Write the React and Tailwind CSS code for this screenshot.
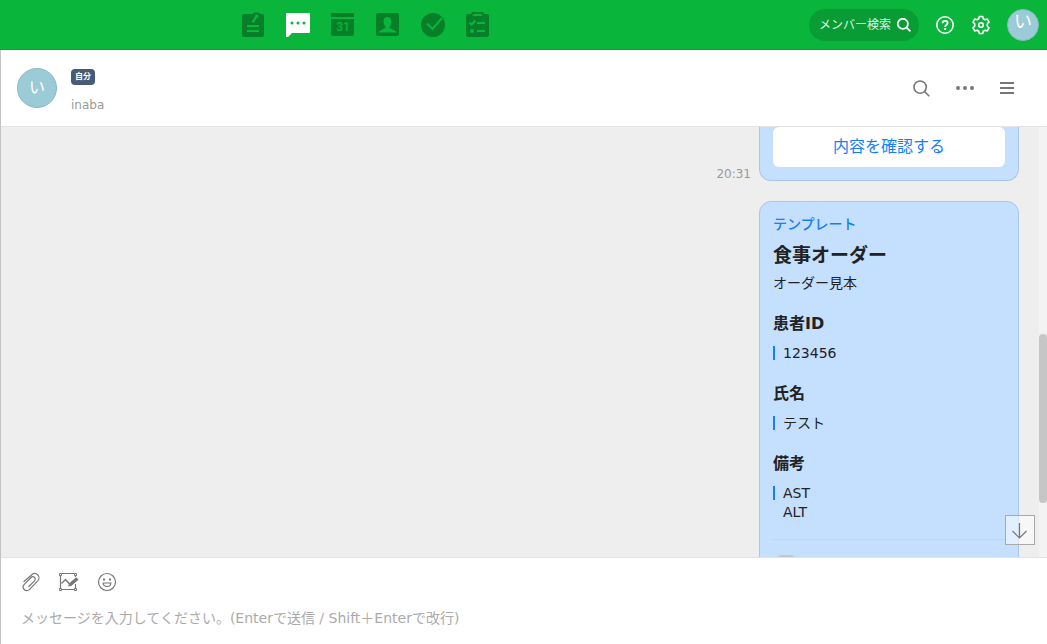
import React, { useState } from "react";

const navItems = [
  {
    label: "掲示板",
    icon: (
      <svg width="24" height="26" viewBox="0 0 24 26" fill="none">
        <path
          d="M3 2h8.500c.8-1.300 2-1.500 3.500-1.500 2.500 0 3.500.5 4 1.500h2a2 2 0 0 1 2 2v19a2 2 0 0 1-2 2H3a2 2 0 0 1-2-2V4a2 2 0 0 1 2-2z"
          fill="#077f29"
        />
        <path
          d="M15.500 4.500l-3.500 5"
          stroke="#09b53b"
          strokeWidth="2.200"
          strokeLinecap="round"
        />
        <circle cx="15.800" cy="4.200" r="1.700" fill="#09b53b" />
        <path d="M6 14h12M6 19h12" stroke="#09b53b" strokeWidth="2" />
      </svg>
    ),
  },
  {
    label: "トーク",
    icon: (
      <svg width="24" height="26" viewBox="0 0 24 26">
        <path
          d="M1 1h22a1 1 0 0 1 1 1v18a1 1 0 0 1-1 1H6l-4 4H0V2a1 1 0 0 1 1-1z"
          fill="#fff"
        />
        <g fill="#09b53b">
          <circle cx="6" cy="11" r="1.500" />
          <circle cx="12" cy="11" r="1.500" />
          <circle cx="18" cy="11" r="1.500" />
        </g>
      </svg>
    ),
  },
  {
    label: "カレンダー",
    icon: (
      <svg width="24" height="26" viewBox="0 0 24 26" fill="#077f29">
        <path d="M1 1h21a1 1 0 0 1 1 1v3H0V2a1 1 0 0 1 1-1z" />
        <path d="M0 7h23v15a2 2 0 0 1-2 2H2a2 2 0 0 1-2-2z" />
        <text
          x="12"
          y="19"
          textAnchor="middle"
          fontSize="12"
          fontWeight="500"
          fontFamily="Roboto, sans-serif"
          fill="#09b53b"
        >
          31
        </text>
      </svg>
    ),
  },
  {
    label: "アドレス帳",
    icon: (
      <svg width="24" height="26" viewBox="0 0 24 26">
        <rect y="1" width="23" height="23" rx="2" fill="#077f29" />
        <path
          d="M11.500 5c2.500 0 4 1.600 4 4.200 0 2.400-1 4.600-2 5.400v1.200c1 1.500 6 2 7 4.700h-18c1-2.700 6-3.200 7-4.700v-1.200c-1-.8-2-3-2-5.400C7.500 6.600 9 5 11.500 5z"
          fill="#09b53b"
        />
      </svg>
    ),
  },
  {
    label: "タスク",
    icon: (
      <svg width="24" height="26" viewBox="0 0 24 26" fill="none">
        <circle cx="12" cy="13" r="12" fill="#077f29" />
        <path d="M6 11.500l5.500 5.500L21 6" stroke="#09b53b" strokeWidth="2" />
      </svg>
    ),
  },
  {
    label: "アンケート",
    icon: (
      <svg width="24" height="26" viewBox="0 0 24 26" fill="none">
        <path
          d="M2 2h4v2h11V2h4a2 2 0 0 1 2 2v19a2 2 0 0 1-2 2H2a2 2 0 0 1-2-2V4a2 2 0 0 1 2-2z"
          fill="#077f29"
        />
        <path d="M6.500 3.500V1h10v2.500" stroke="#077f29" strokeWidth="1.800" />
        <path d="M8 2h7v2H8z" fill="#09b53b" />
        <path
          d="M3.500 10.500l2 2 4-4M11 11h8M11 19h8"
          stroke="#09b53b"
          strokeWidth="2"
        />
        <circle cx="6" cy="19" r="2" fill="#09b53b" />
      </svg>
    ),
  },
];

const fields = [
  { name: "患者ID", lines: ["123456"] },
  { name: "氏名", lines: ["テスト"] },
  { name: "備考", lines: ["AST", "ALT"] },
];

const SearchIcon = ({ size, width }) => (
  <svg
    width={size}
    height={size}
    viewBox="0 0 16 16"
    fill="none"
    stroke="currentColor"
    strokeWidth={width}
  >
    <circle cx="6.700" cy="6.700" r="5.800" />
    <path d="M10.800 10.800l4.500 4.500" />
  </svg>
);

const TopBar = () => {
  return (
    <header className="flex h-[50px] shrink-0 items-center justify-between border-b border-[#08a334] bg-[#09b53b] pr-2 pl-[241px]">
      <nav className="flex gap-[21px]">
        {navItems.map((item) => (
          <a key={item.label} href="#" aria-label={item.label}>
            {item.icon}
          </a>
        ))}
      </nav>
      <div className="flex items-center text-white">
        <button className="mr-4 flex h-8 items-center gap-1.5 rounded-full bg-[#099c34] pr-2 pl-2.5 text-xs text-[#dcf5e2]">
          メンバー検索
          <span className="text-white">
            <SearchIcon size={14} width={2} />
          </span>
        </button>
        <button aria-label="ヘルプ" className="mr-4">
          <svg
            width="20"
            height="20"
            viewBox="0 0 20 20"
            fill="none"
            stroke="currentColor"
          >
            <circle cx="10" cy="10" r="8.200" strokeWidth="1.600" />
            <path
              d="M7.600 8.300c0-1.500 1-2.400 2.500-2.400s2.500.9 2.500 2.100c0 1.700-2.400 1.800-2.400 3.900"
              strokeWidth="1.900"
            />
            <path d="M9.200 13h2v2h-2z" fill="currentColor" stroke="none" />
          </svg>
        </button>
        <button aria-label="設定" className="mr-4">
          <svg
            width="20"
            height="20"
            viewBox="0 0 20 20"
            fill="none"
            stroke="currentColor"
            strokeWidth="1.600"
            strokeLinejoin="round"
          >
            <path d="M8.300 1.500h3.400l.6 2.300 1.700 1 2.300-.7 1.700 3-1.700 1.700v2.400l1.700 1.700-1.700 3-2.300-.7-1.700 1-.6 2.300H8.300l-.6-2.300-1.700-1-2.300.7-1.700-3 1.700-1.700V8.800L2 7.100l1.700-3 2.300.7 1.700-1z" />
            <circle cx="10" cy="10" r="2.300" />
          </svg>
        </button>
        <button className="flex size-8 justify-center rounded-full border border-[#86bac6] bg-[#9bcbd7] text-lg leading-6">
          い
        </button>
      </div>
    </header>
  );
};

const ChatHeader = () => {
  return (
    <div className="flex h-[77px] shrink-0 items-center justify-between border-b border-[#e3e3e3] pr-8 pl-4">
      <div className="flex items-center gap-3.5">
        <div className="flex size-10 items-center justify-center rounded-full border border-[#86bac6] bg-[#9bcbd7] text-base text-white">
          い
        </div>
        <div className="flex flex-col items-start gap-3 pt-1.5">
          <span className="rounded-sm bg-[#475b78] px-1 text-[8px] leading-4 font-bold text-white">
            自分
          </span>
          <span className="text-xs leading-4 text-[#999]">inaba</span>
        </div>
      </div>
      <div className="flex items-center gap-[26px] text-[#777]">
        <button aria-label="検索">
          <SearchIcon size={17} width={1.5} />
        </button>
        <button aria-label="その他">
          <svg width="18" height="16" viewBox="0 0 18 16" fill="currentColor">
            <circle cx="2" cy="8" r="2" />
            <circle cx="9" cy="8" r="2" />
            <circle cx="16" cy="8" r="2" />
          </svg>
        </button>
        <button aria-label="メニュー">
          <svg width="15" height="16" viewBox="0 0 15 16" fill="currentColor">
            <path d="M0 2h14v2H0zM0 7h14v2H0zM0 12h14v2H0z" />
          </svg>
        </button>
      </div>
    </div>
  );
};

const Messages = () => {
  return (
    <main className="relative flex min-h-0 flex-1 bg-[#eee]">
      <div className="flex min-w-0 flex-1 flex-col items-end gap-5 overflow-hidden pr-5">
        <div className="flex shrink-0 items-end gap-2">
          <time className="text-xs leading-3.5 text-[#999]">20:31</time>
          <div className="w-[260px] rounded-b-xl border border-t-0 border-[#abc6e6] bg-[#c5dfff] px-[13px] pb-[13px]">
            <button className="h-10 w-full rounded-md bg-white text-base text-[#157efb]">
              内容を確認する
            </button>
          </div>
        </div>
        <article className="w-[260px] shrink-0 rounded-xl border border-[#abc6e6] bg-[#c5dfff] px-[13px] pt-3 text-sm text-[#222]">
          <p className="leading-5 font-medium text-[#157efb]">テンプレート</p>
          <h2 className="mt-[5px] text-[19px] leading-8 font-bold">
            食事オーダー
          </h2>
          <p className="mt-0.5 leading-5">オーダー見本</p>
          <dl>
            {fields.map((field) => (
              <div key={field.name} className="mt-[19px]">
                <dt className="text-base leading-6 font-bold">{field.name}</dt>
                <dd className="mt-2 flex gap-2 leading-[19px]">
                  <span className="mt-0.5 h-3.5 w-0.5 bg-[#157efb]" />
                  <div>
                    {field.lines.map((line) => (
                      <p key={line}>{line}</p>
                    ))}
                  </div>
                </dd>
              </div>
            ))}
          </dl>
          <div className="mt-[17px] border-t border-[#bad6f7] pt-[15px] pl-[3px] pb-4">
            <div className="size-5 rounded-md bg-[#c5c5c5]" />
          </div>
        </article>
      </div>
      {/* scrollbar */}
      <div className="w-2 bg-[#f3f3f3] pt-[207px]">
        <div className="h-[169px] rounded-full bg-[#c6c6c6]" />
      </div>
      <button
        aria-label="最新のメッセージへ"
        className="absolute right-3 bottom-3 flex size-[30px] items-center justify-center border border-[#aaa] bg-white/50 text-[#777]"
      >
        <svg
          width="16"
          height="18"
          viewBox="0 0 16 18"
          fill="none"
          stroke="currentColor"
          strokeWidth="1.200"
        >
          <path d="M7.500 2v15M.5 10l7 7 7-7" />
        </svg>
      </button>
    </main>
  );
};

const Composer = () => {
  const [message, setMessage] = useState("");

  return (
    <footer className="shrink-0 border-t border-[#e3e3e3] bg-white px-5 pt-3.5 pb-3.5">
      <div className="flex gap-[18px] text-[#777]">
        <button aria-label="ファイル添付">
          <svg
            width="20"
            height="20"
            viewBox="0 0 20 20"
            fill="none"
            stroke="currentColor"
            strokeWidth="1.200"
            strokeLinecap="round"
          >
            <path d="M3 9.500L10.800 2.700c1.700-1.500 4.200-1.500 5.800 0s1.900 4.200.4 5.900l-8.400 8.700c-1.600 1.600-4 1.600-5.400.2s-1.400-3.600.1-5.200l6.700-6.800c1-1 2.600-1.100 3.500-.1s.9 2.400 0 3.400l-5.700 5.700" />
          </svg>
        </button>
        <button aria-label="画像編集">
          <svg
            width="20"
            height="20"
            viewBox="0 0 20 20"
            fill="none"
            stroke="currentColor"
          >
            <path
              d="M1.500 3v14M16.500 12v5M3 1.500h12M3 17.500h12M16.500 3v2"
              strokeWidth="1.200"
            />
            <path d="M.5 1.500h2v2h-2zM15.500 1.500h2v2h-2zM.5 16.500h2v2h-2zM15.500 16.500h2v2h-2z" />
            <path d="M2.500 11.500l4-4 4.500 5" strokeWidth="1.300" />
            <path
              d="M9 14.500l1.200-3.200 7-6 2.300 2.400-7 6z"
              fill="currentColor"
              stroke="none"
            />
          </svg>
        </button>
        <button aria-label="スタンプ">
          <svg
            width="20"
            height="20"
            viewBox="0 0 20 20"
            fill="none"
            stroke="currentColor"
            strokeWidth="1.200"
          >
            <circle cx="10" cy="10" r="8.500" />
            <path d="M6.200 11h7.600c0 2.200-1.600 3.500-3.800 3.500S6.200 13.200 6.200 11z" />
            <path
              d="M6 6.500h2v2H6zM12 6.500h2v2h-2z"
              fill="currentColor"
              stroke="none"
            />
          </svg>
        </button>
      </div>
      <textarea
        aria-label="メッセージ"
        rows={1}
        value={message}
        onChange={(e) => setMessage(e.target.value)}
        placeholder="メッセージを入力してください。(Enterで送信 / Shift＋Enterで改行)"
        className="mt-3.5 block h-6 w-full resize-none overflow-hidden text-sm leading-6 text-[#222] outline-none placeholder:text-[#aaa]"
      />
    </footer>
  );
};

const App = () => {
  return (
    <div className="flex h-screen flex-col bg-white font-['DejaVu_Sans','Noto_Sans_CJK_JP',sans-serif]">
      <TopBar />
      <div className="flex min-h-0 flex-1 flex-col border-l border-[#c4c4c4]">
        <ChatHeader />
        <Messages />
        <Composer />
      </div>
    </div>
  );
};

export default App;
